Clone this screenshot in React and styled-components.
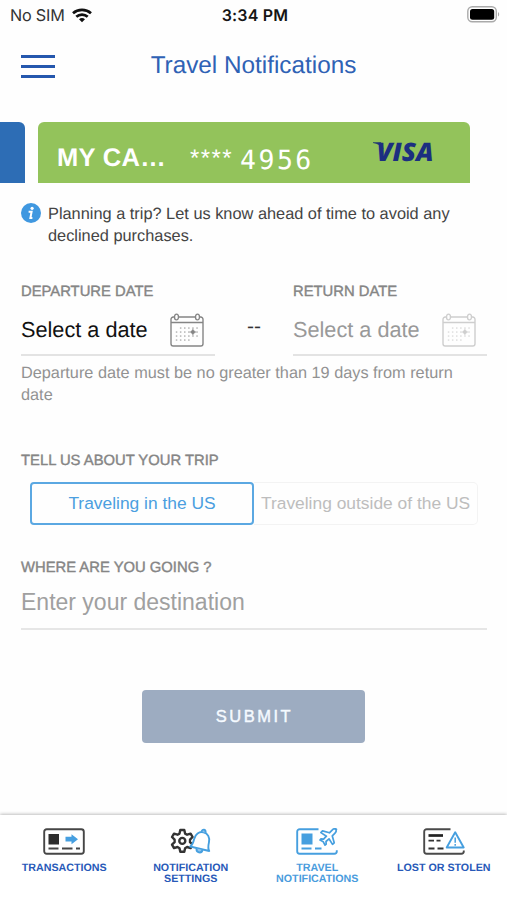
import React, { useState } from "react";
import styled, { createGlobalStyle } from "styled-components";

const GlobalStyle = createGlobalStyle`
  * {
    box-sizing: border-box;
  }
  body {
    margin: 0;
    background: #fefefe;
    font-family: "Liberation Sans", Arial, sans-serif;
    text-rendering: geometricPrecision;
  }
  button, input {
    font-family: inherit;
  }
`;

const Screen = styled.div`
  width: 507px;
  height: 900px;
  display: flex;
  flex-direction: column;
  overflow: hidden;
  background: #fefefe;
`;

const StatusBar = styled.div`
  height: 30px;
  padding: 0 7px 0 10px;
  display: grid;
  grid-template-columns: 1fr auto 1fr;
  align-items: center;
  font-family: Inter, sans-serif;
  color: #151515;
`;

const Carrier = styled.div`
  display: flex;
  align-items: center;
  gap: 7px;
  font-size: 16.2px;
  letter-spacing: -0.2px;
  color: #333;
`;

const Clock = styled.div`
  font-size: 16px;
  font-weight: 600;
  letter-spacing: 0.2px;
`;

const BatterySlot = styled.div`
  display: flex;
  justify-content: flex-end;
  padding-bottom: 2px;
`;

const Header = styled.header`
  height: 92px;
  padding: 0 21px 20px;
  display: grid;
  grid-template-columns: 34px 1fr 34px;
  align-items: center;
`;

const MenuButton = styled.button`
  display: flex;
  flex-direction: column;
  gap: 7px;
  padding: 0;
  border: 0;
  background: none;
`;

const MenuLine = styled.span`
  width: 34px;
  height: 3px;
  background: #2557ad;
`;

const Title = styled.h1`
  margin: 0;
  text-align: center;
  font-size: 24.3px;
  font-weight: 400;
  line-height: 28px;
  color: #2f62b5;
`;

const Cards = styled.div`
  display: flex;
  gap: 13px;
  height: 61px;
`;

const PreviousCard = styled.div`
  width: 25px;
  border-radius: 0 6px 0 0;
  background: #2d6db5;
`;

const Card = styled.div`
  width: 432px;
  padding: 0 35px 0 19px;
  border-radius: 6px 6px 0 0;
  background: #93c35b;
  color: #fff;
  display: flex;
`;

const CardName = styled.div`
  width: 133px;
  padding-top: 21px;
  font-size: 25.5px;
  font-weight: 700;
  line-height: 30px;
  letter-spacing: 0.3px;
`;

const CardMask = styled.div`
  width: 50px;
  padding-top: 22px;
  font-size: 24px;
  line-height: 30px;
  letter-spacing: 1.4px;
`;

const CardDigits = styled.div`
  flex: 1;
  padding-top: 23px;
  font-family: "DejaVu Sans Mono", monospace;
  font-size: 26.5px;
  line-height: 32px;
  letter-spacing: 2.5px;
`;

const BrandSlot = styled.div`
  padding-top: 18px;
`;

const Main = styled.main`
  flex: 1;
  padding: 20px 20px 0 21px;
`;

const Info = styled.div`
  display: flex;
  gap: 7px;
  font-size: 16.35px;
  line-height: 22px;
  color: #444;
`;

const Dates = styled.div`
  display: grid;
  grid-template-columns: 194px 1fr 194px;
  margin-top: 35px;
`;

const Label = styled.div`
  font-size: 14.8px;
  line-height: 20px;
  color: #858585;
  -webkit-text-stroke: 0.4px #858585;
`;

const DateRow = styled.div`
  height: 54px;
  padding: 3px 11px 0 0;
  display: flex;
  align-items: center;
  justify-content: space-between;
  border-bottom: 2px solid #e3e3e3;
  font-size: 21.7px;
  color: ${(props) => (props.$disabled ? "#999" : "#111")};
`;

const Dash = styled.div`
  padding-top: 33px;
  text-align: center;
  font-size: 21px;
  color: #333;
`;

const Hint = styled.p`
  margin: 7px 0 0;
  font-size: 16.3px;
  line-height: 21.5px;
  color: #929292;
`;

const Section = styled.section`
  margin-top: ${(props) => props.$top}px;
`;

const Segments = styled.div`
  display: flex;
  margin: 11px 8px 0 9px;
`;

const Segment = styled.button`
  width: 224px;
  height: 43px;
  padding: 0 0 1px;
  font-size: 17.4px;
  background: none;
  white-space: nowrap;
  border: ${(props) =>
    props.$active ? "2px solid #5ba8e2" : "1px solid #f3f3f3"};
  border-left-width: ${(props) => (props.$active ? "2px" : "0")};
  border-radius: ${(props) => (props.$active ? "4px" : "0 5px 5px 0")};
  color: ${(props) => (props.$active ? "#4b9fe0" : "#bdbdbd")};
`;

const Destination = styled.input`
  display: block;
  width: 100%;
  height: 52px;
  padding: 0 0 2px;
  border: 0;
  border-bottom: 2px solid #e6e6e6;
  background: none;
  font-size: 23px;
  &::placeholder {
    color: #a0a0a0;
    opacity: 1;
  }
`;

const Submit = styled.button`
  display: block;
  width: 223px;
  height: 53px;
  margin: 60px 0 0 121px;
  padding: 0 0 0 2px;
  border: 0;
  border-radius: 4px;
  background: #9dacc1;
  color: #f5faff;
  font-size: 16.5px;
  letter-spacing: 2.5px;
  -webkit-text-stroke: 0.4px #f5faff;
`;

const TabBar = styled.nav`
  height: 85px;
  padding-left: 1px;
  display: grid;
  grid-template-columns: repeat(4, 1fr);
  background: #fff;
  box-shadow: 0 -1px 3px rgba(0, 0, 0, 0.25);
`;

const Tab = styled.div`
  display: flex;
  flex-direction: column;
  align-items: center;
  gap: 8px;
  padding-top: 13px;
  font-size: 10.7px;
  font-weight: 700;
  line-height: 11px;
  text-align: center;
  white-space: pre-line;
  color: ${(props) => (props.$active ? "#499cdd" : "#2859b8")};
`;

const WifiIcon = () => (
  <svg width="20" height="15" viewBox="0 0 20 15" fill="none" stroke="#111" strokeWidth="2.7">
    <path d="M1 5.2C6 .7 14 .7 19 5.2" />
    <path d="M4.3 8.8c3.2-3 8.2-3 11.4 0" />
    <path d="M10 14.2l-3-3c1.7-1.6 4.3-1.6 6 0z" fill="#111" stroke="none" />
  </svg>
);

const BatteryIcon = () => (
  <svg width="33" height="17" viewBox="0 0 33 17">
    <rect x=".8" y=".8" width="28.5" height="15" rx="4.5" fill="none" stroke="#aaa" strokeWidth="1.4" />
    <rect x="3" y="3" width="24.2" height="10.7" rx="2.5" fill="#000" />
    <path d="M31 6v4.6c1.6-.8 1.6-3.8 0-4.6z" fill="#aaa" />
  </svg>
);

const Logo = styled.svg`
  display: block;
  overflow: visible;
`;

const VisaLogo = () => (
  <Logo width="63" height="36" viewBox="0 0 63 36">
    <path d="M1 2.200h8l2.800 7C9 5.600 5.500 3.600 1 3z" fill="#21386f" />
    <text
      x="4.500"
      y="20.500"
      textLength="57"
      lengthAdjust="spacingAndGlyphs"
      fontFamily="Open Sans, sans-serif"
      fontStyle="italic"
      fontWeight="800"
      fontSize="25.500"
      fill="#1c2f80"
    >
      VISA
    </text>
  </Logo>
);

const InfoIcon = () => (
  <svg width="20" height="20" viewBox="0 0 20 20">
    <circle cx="10" cy="10" r="10" fill="#4098e0" />
    <circle cx="11.1" cy="5.3" r="1.6" fill="#fff" />
    <path d="M7.6 8.8h3L9.4 15h2" fill="none" stroke="#fff" strokeWidth="2" />
  </svg>
);

const dots = [0, 1, 2, 3].flatMap((row) =>
  [0, 1, 2, 3, 4, 5]
    .filter((col) => !(row === 0 && col === 0) && !(row === 3 && col > 3))
    .map((col) => [6.5 + col * 4.1, 15 + row * 4])
);

const CalendarIcon = ({ color, soft }) => (
  <svg width="34" height="34" viewBox="0 0 34 34" fill="none" stroke={color} strokeWidth="1.4">
    <path d="M4 4H3.2A2.2 2.2 0 0 0 1 6.2v24.6A2.2 2.2 0 0 0 3.2 33h27.600a2.2 2.2 0 0 0 2.2-2.2V6.2A2.2 2.2 0 0 0 30.8 4H30M9 4h16M1 9.5h32" />
    <ellipse cx="6.5" cy="4" rx="2" ry="2.9" />
    <ellipse cx="27.5" cy="4" rx="2" ry="2.9" />
    {dots.map(([x, y]) => (
      <rect key={`${x}-${y}`} x={x - 0.7} y={y - 0.7} width="1.5" height="1.5" fill={soft} stroke="none" />
    ))}
    <circle cx="22.9" cy="19" r="2" fill={color} stroke="none" />
    <path d="M22.9 15.8v6.4M19.7 19h6.4" strokeWidth="1" />
  </svg>
);

const TransactionsIcon = () => (
  <svg width="42" height="27" viewBox="0 0 42 27" fill="none" stroke="#464646">
    <rect x="1.2" y="1.2" width="39.6" height="24.6" rx="2.5" strokeWidth="1.9" />
    <rect x="5.5" y="6" width="10.5" height="10.5" fill="#2d2d2d" stroke="none" />
    <path d="M5.5 20.5h10M19 20.5h10.5M33 20.5h4" strokeWidth="1.8" />
    <path d="M22.500 8.800h6V6.200l6.500 5-6.500 5v-2.600h-6z" fill="#469fe0" stroke="none" />
  </svg>
);

const SettingsIcon = () => (
  <svg width="42" height="27" viewBox="0 0 42 27" fill="none" strokeWidth="2.4" strokeLinejoin="round">
    <path
      stroke="#333"
      d="M10.300 2h4l.8 3.600 2 1.100 3.500-1.100 2 3.400-2.600 2.600v2.600l2.600 2.500-2 3.400-3.500-1.100-2 1.200-.8 3.500h-4l-.8-3.500-2-1.200L4 20.100l-2-3.400 2.600-2.500v-2.600L2 9l2-3.400 3.500 1.100 2-1.100z"
    />
    <circle cx="12.3" cy="12.9" r="3" stroke="#333" />
    <g stroke="#459fdf" strokeWidth="1.9" transform="translate(.3 -.6) rotate(13 31 13)">
      <path d="M21.500 21.500c2-2 2.200-4 2.200-8.300 0-5 3.100-8.600 7.600-8.600s7.600 3.600 7.600 8.600c0 4.300.2 6.300 2.200 8.300z" fill="#fff" />
      <path d="M29.300 4.600c0-3.600 4-3.600 4 0M28.300 22c0 4.200 6 4.200 6 0" fill="#8fc4ee" />
    </g>
  </svg>
);

const TravelIcon = () => (
  <svg width="42" height="27" viewBox="0 0 42 27" fill="none" stroke="#469fdf" strokeWidth="1.9" strokeLinejoin="round">
    <path d="M22.500 1.200H3.700A2.500 2.500 0 0 0 1.200 3.700v19.600a2.500 2.500 0 0 0 2.500 2.500h34.600a2.500 2.500 0 0 0 2.500-2.500v-1" />
    <rect x="5.5" y="5.5" width="11" height="11" fill="#469fdf" stroke="none" />
    <path d="M5.5 20.5h10M19 20.5h6.5" />
    <path
      strokeWidth="1.700"
      d="M40.500 1.300c-1.300-1-3.200-.4-4.600 1l-2.500 2.500-6.900-1.900-1.600 1.700 5.500 3.600-2.800 3-2.600-.3-1 1.100 3.300 1.800 1.700 3.400 1.200-1-.2-2.700 3-2.700 3.500 5.600 1.700-1.600-1.900-6.900 2.500-2.500c1.300-1.300 2-3 .7-4.100z"
    />
  </svg>
);

const LostIcon = () => (
  <svg width="42" height="27" viewBox="0 0 42 27" fill="none" stroke="#4a4a4a" strokeWidth="1.9">
    <path d="M27.500 1.200H3.700A2.500 2.500 0 0 0 1.200 3.700v19.600a2.500 2.500 0 0 0 2.500 2.500h34.600a2.500 2.500 0 0 0 2.500-2.500v-.8" />
    <path d="M5.500 7.500h14.500" stroke="#222" strokeWidth="2.7" />
    <path d="M5.500 12.700h5.500M13.500 12.700h4M5.500 20.500h6M14.500 20.500h6" stroke="#333" strokeWidth="1.8" />
    <path d="M32.200 4.300l8.500 15.200H23.700z" fill="#fff" stroke="#469fdf" strokeLinejoin="round" />
    <path d="M32.200 9.500v5.200M32.200 16v1.800" stroke="#469fdf" strokeWidth="1.500" />
  </svg>
);

const tabs = [
  { label: "TRANSACTIONS", icon: <TransactionsIcon /> },
  { label: "NOTIFICATION\nSETTINGS", icon: <SettingsIcon /> },
  { label: "TRAVEL\nNOTIFICATIONS", icon: <TravelIcon />, active: true },
  { label: "LOST OR STOLEN", icon: <LostIcon /> },
];

const App = () => {
  const [domestic, setDomestic] = useState(true);
  const [destination, setDestination] = useState("");

  return (
    <Screen>
      <GlobalStyle />
      <StatusBar>
        <Carrier>
          No SIM <WifiIcon />
        </Carrier>
        <Clock>3:34 PM</Clock>
        <BatterySlot>
          <BatteryIcon />
        </BatterySlot>
      </StatusBar>
      <Header>
        <MenuButton aria-label="Menu">
          <MenuLine />
          <MenuLine />
          <MenuLine />
        </MenuButton>
        <Title>Travel Notifications</Title>
      </Header>
      <Cards>
        <PreviousCard />
        <Card>
          <CardName>MY CA…</CardName>
          <CardMask>****</CardMask>
          <CardDigits>4956</CardDigits>
          <BrandSlot>
            <VisaLogo />
          </BrandSlot>
        </Card>
      </Cards>
      <Main>
        <Info>
          <InfoIcon />
          <div>
            Planning a trip? Let us know ahead of time to avoid any
            <br />
            declined purchases.
          </div>
        </Info>
        <Dates>
          <div>
            <Label>DEPARTURE DATE</Label>
            <DateRow>
              Select a date <CalendarIcon color="#858585" soft="#b5b5b5" />
            </DateRow>
          </div>
          <Dash>--</Dash>
          <div>
            <Label>RETURN DATE</Label>
            <DateRow $disabled>
              Select a date <CalendarIcon color="#cecece" soft="#dedede" />
            </DateRow>
          </div>
        </Dates>
        <Hint>
          Departure date must be no greater than 19 days from return
          <br />
          date
        </Hint>
        <Section $top={45}>
          <Label>TELL US ABOUT YOUR TRIP</Label>
          <Segments>
            <Segment $active={domestic} onClick={() => setDomestic(true)}>
              Traveling in the US
            </Segment>
            <Segment $active={!domestic} onClick={() => setDomestic(false)}>
              Traveling outside of the US
            </Segment>
          </Segments>
        </Section>
        <Section $top={33}>
          <Label>WHERE ARE YOU GOING ?</Label>
          <Destination
            placeholder="Enter your destination"
            value={destination}
            onChange={(e) => setDestination(e.target.value)}
          />
        </Section>
        <Submit>SUBMIT</Submit>
      </Main>
      <TabBar>
        {tabs.map((tab) => (
          <Tab key={tab.label} $active={tab.active}>
            {tab.icon}
            <span>{tab.label}</span>
          </Tab>
        ))}
      </TabBar>
    </Screen>
  );
};

export default App;
